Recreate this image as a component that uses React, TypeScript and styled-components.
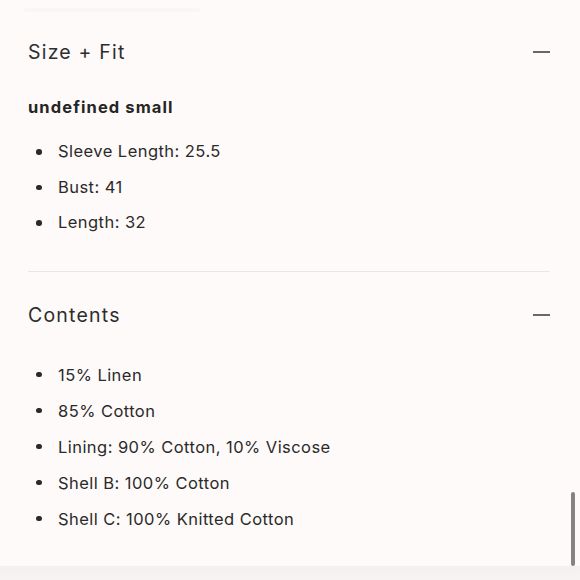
import styled, { createGlobalStyle } from 'styled-components';

const GlobalStyle = createGlobalStyle`
	html, body {
		margin: 0;
		padding: 0;
		background: #fdfaf9;
	}
	body {
		font-family: Inter, "Open Sans", "Liberation Sans", sans-serif;
		color: #2b2a2a;
	}
`;

const Frame = styled.div`
	position: relative;
	width: 580px;
	height: 580px;
	overflow: hidden;
	display: flex;
	flex-direction: column;
	background: #fdfaf9;
`;

const TopFade = styled.div`
	height: 4px;
	margin: 8px 380px 0 24px;
	background: #faf6f5;
	border-radius: 2px;
`;

const Content = styled.div`
	flex: 1;
	padding: 24px 30px 0 28px;
`;

const Section = styled.section<{ $divider?: boolean }>`
	border-bottom: ${(p) => (p.$divider ? '1px solid #ebe6e5' : 'none')};
	padding-bottom: ${(p) => (p.$divider ? '30px' : '0')};
	margin-bottom: ${(p) => (p.$divider ? '27px' : '0')};
`;

const Header = styled.div`
	display: flex;
	align-items: center;
	justify-content: space-between;
	height: 32px;
`;

const Title = styled.h2`
	margin: 0;
	font-size: 19.5px;
	font-weight: 400;
	letter-spacing: 1.2px;
	color: #2e2d2d;
`;

const Minus = styled.span`
	display: block;
	width: 17px;
	height: 2px;
	background: #6a6867;
`;

const Subhead = styled.h3`
	margin: 27px 0 0;
	font-size: 16.5px;
	line-height: 24px;
	font-weight: 700;
	letter-spacing: 1.1px;
	color: #262525;
`;

const List = styled.ul<{ $gap: number; $top: number }>`
	list-style: none;
	margin: ${(p) => p.$top}px 0 0;
	padding: 0;

	li {
		line-height: ${(p) => p.$gap}px;
	}
`;

const Item = styled.li`
	display: flex;
	align-items: center;
	font-size: 16.5px;
	letter-spacing: 0.45px;
	color: #2b2a2a;
`;

const Dot = styled.span`
	width: 5.5px;
	height: 5.5px;
	border-radius: 50%;
	background: #2b2a2a;
	margin: 0 16.5px 0 8px;
	flex-shrink: 0;
`;

const BottomBand = styled.div`
	height: 14px;
	background: linear-gradient(#f3f0ef, #f6f3f2);
`;

const Scrollbar = styled.div`
	position: absolute;
	right: 5px;
	top: 492px;
	width: 4px;
	height: 74px;
	border-radius: 2px;
	background: #858383;
`;

const sizeFit = ['Sleeve Length: 25.5', 'Bust: 41', 'Length: 32'];
const contents = [
	'15% Linen',
	'85% Cotton',
	'Lining: 90% Cotton, 10% Viscose',
	'Shell B: 100% Cotton',
	'Shell C: 100% Knitted Cotton',
];

const App = () => {
	return (
		<>
			<GlobalStyle />
			<Frame>
				<TopFade />
				<Content>
					<Section $divider>
						<Header>
							<Title>Size + Fit</Title>
							<Minus />
						</Header>
						<Subhead>undefined small</Subhead>
						<List $gap={35.5} $top={15}>
							{sizeFit.map((t) => (
								<Item key={t}>
									<Dot />
									{t}
								</Item>
							))}
						</List>
					</Section>
					<Section>
						<Header>
							<Title>Contents</Title>
							<Minus />
						</Header>
						<List $gap={36} $top={26}>
							{contents.map((t) => (
								<Item key={t}>
									<Dot />
									{t}
								</Item>
							))}
						</List>
					</Section>
				</Content>
				<BottomBand />
				<Scrollbar />
			</Frame>
		</>
	);
};

export default App;
